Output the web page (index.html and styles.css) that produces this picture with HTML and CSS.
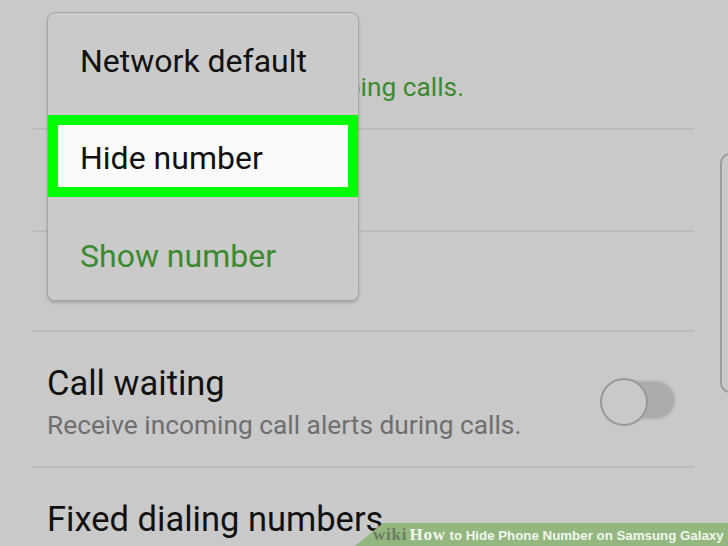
FILE: index.html
```html
<!DOCTYPE html>
<html lang="en">

<head>
    <meta charset="UTF-8">
    <title>Call settings</title>
    <link rel="stylesheet" href="styles.css">
</head>

<body>

    <div class="screen">

        <ul class="settings">
            <!-- rows under the picker only show their right-hand side -->
            <li class="row row-first">
                <p class="summary accent">Show my number on outgoing calls.</p>
            </li>
            <li class="row row-single"></li>
            <li class="row row-single row-short"></li>
            <li class="row row-switch">
                <div class="row-text">
                    <p class="title">Call waiting</p>
                    <p class="summary">Receive incoming call alerts during calls.</p>
                </div>
                <span class="switch"></span>
            </li>
            <li class="row row-last">
                <p class="title">Fixed dialing numbers</p>
            </li>
        </ul>

        <div class="scroll-edge"></div>

        <!-- caller id picker -->
        <div class="menu">
            <p class="menu-item">Network default</p>
            <p class="menu-item selected">Hide number</p>
            <p class="menu-item accent">Show number</p>
        </div>

        <div class="watermark"><span class="wm-wiki">wiki</span><span class="wm-how">How</span> to Hide Phone Number on Samsung Galaxy</div>

    </div>

</body>
</html>
```

FILE: styles.css
```css
* {
    margin: 0;
    padding: 0;
    box-sizing: border-box;
}

html,
body {
    width: 728px;
    height: 546px;
    overflow: hidden;
}

body {
    background-color: #c9c9c9;
    font-family: Roboto, "Noto Sans", sans-serif;
    color: #111;
}

.screen {
    position: relative;
    height: 546px;
    overflow: hidden;
}

.settings {
    list-style: none;
}

.row {
    display: flex;
    align-items: flex-start;
    margin: 0 34px 0 33px;
    padding: 0 14px;
    border-bottom: 2px solid #bbbbbb;
}

.row-first {
    height: 130px;
    padding-top: 71px;
}

.row-first .summary {
    margin-top: 0;
}

.row-single {
    height: 102px;
}

.row-short {
    height: 100px;
}

.row-switch {
    height: 136px;
    padding-top: 31px;
    justify-content: space-between;
}

.row-last {
    border-bottom: none;
    padding-top: 31px;
}

.title {
    font-size: 34.5px;
    line-height: 40px;
}

.summary {
    margin-top: 6px;
    font-size: 26.3px;
    line-height: 32px;
    color: #6f6f6f;
}

.accent {
    color: #3b8a30;
}

/* switch, off state */
.switch {
    position: relative;
    width: 75px;
    height: 44px;
    margin: 15px 5px 0 0;
    flex-shrink: 0;
}

.switch::before {
    content: "";
    position: absolute;
    left: 10px;
    top: 3px;
    width: 65px;
    height: 38px;
    border-radius: 19px;
    background-color: #acacac;
    filter: blur(1px);
}

.switch::after {
    content: "";
    position: absolute;
    left: 0;
    top: 0;
    width: 44px;
    height: 44px;
    border-radius: 50%;
    border: 2px solid #999;
    background-color: #c9c9c9;
}

.scroll-edge {
    position: absolute;
    left: 720px;
    top: 153px;
    width: 20px;
    height: 240px;
    border: 2px solid #9c9c9c;
    border-radius: 10px;
}

.menu {
    position: absolute;
    left: 47px;
    top: 12px;
    width: 312px;
    height: 289px;
    background-color: #cacaca;
    border: 1px solid #a6a6a6;
    border-radius: 8px;
    box-shadow: 0 2px 3px rgba(0, 0, 0, 0.18);
    overflow: hidden;
}

.menu-item {
    height: 102px;
    padding: 29px 0 0 32px;
    font-size: 32px;
    line-height: 38px;
}

.menu-item.selected {
    height: 82px;
    padding: 14px 0 0 22px;
    border: 10px solid #00ff00;
    background-color: #fafafa;
}

.menu-item.accent {
    height: auto;
    padding-top: 40px;
}

.watermark {
    position: absolute;
    left: 355px;
    right: 0;
    bottom: 0;
    height: 23px;
    padding-left: 18px;
    background-color: #94b77f;
    clip-path: polygon(28px 0, 100% 0, 100% 100%, 0 100%);
    font-family: "Liberation Sans", Arial, sans-serif;
    font-weight: 700;
    font-size: 13.3px;
    line-height: 24px;
    color: #f2f6ee;
    white-space: nowrap;
}

.wm-wiki,
.wm-how {
    font-family: "Liberation Serif", serif;
    font-size: 17px;
    letter-spacing: 0.8px;
}

.wm-wiki {
    color: #6b7c62;
}

.wm-how {
    margin-left: 2px;
}
```
